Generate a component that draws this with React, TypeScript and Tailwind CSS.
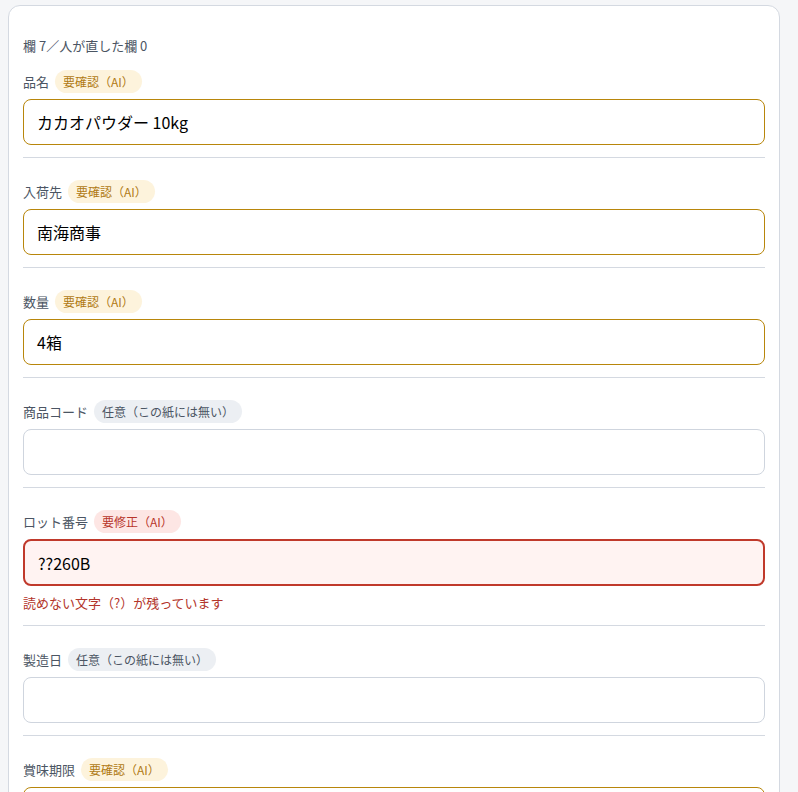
import React from "react";

type Tone = "warn" | "error" | "optional";

interface Field {
  label: string;
  tone: Tone;
  value: string;
  error?: string;
}

const fields: Field[] = [
  { label: "品名", tone: "warn", value: "カカオパウダー 10kg" },
  { label: "入荷先", tone: "warn", value: "南海商事" },
  { label: "数量", tone: "warn", value: "4箱" },
  { label: "商品コード", tone: "optional", value: "" },
  { label: "ロット番号", tone: "error", value: "??260B", error: "読めない文字（?）が残っています" },
  { label: "製造日", tone: "optional", value: "" },
  { label: "賞味期限", tone: "warn", value: "2026-03-31" },
];

const badgeText: Record<Tone, string> = {
  warn: "要確認（AI）",
  error: "要修正（AI）",
  optional: "任意（この紙には無い）",
};

const badgeClass: Record<Tone, string> = {
  warn: "bg-[#fdf3dc] text-[#b07a14]",
  error: "bg-[#fde6e4] text-[#b8352a]",
  optional: "bg-[#eceff3] text-[#4b5563]",
};

const inputClass: Record<Tone, string> = {
  warn: "h-[46px] border border-[#b8860b] bg-white",
  error: "h-[47px] border-2 border-[#c0392b] bg-[#fff3f2] px-[12px]",
  optional: "h-[46px] border border-[#cfd5de] bg-white",
};

function FieldRow({ field }: { field: Field }) {
  return (
    <div className="border-b border-[#d4d9e1] pb-3 pt-[22px] first:pt-0">
      <div className="flex h-[23px] items-center gap-[6px]">
        <span className="text-[13px] leading-none text-[#4b5563]">{field.label}</span>
        <span
          className={`flex h-[23px] items-center rounded-full px-[8px] text-[12px] leading-none ${badgeClass[field.tone]}`}
        >
          {badgeText[field.tone]}
        </span>
      </div>
      <div
        className={`mt-[6px] flex items-center rounded-lg px-[13px] text-[16px] text-black ${inputClass[field.tone]}`}
      >
        {field.value}
      </div>
      {field.error && (
        <p className="mt-[7px] text-[13px] leading-[20px] text-[#b3352b]">{field.error}</p>
      )}
    </div>
  );
}

export default function App() {
  return (
    <div
      className="min-h-screen bg-[#f5f6f8] px-2 pt-[5px]"
      style={{ fontFamily: '"Noto Sans CJK JP", "Noto Sans", sans-serif' }}
    >
      <div className="w-[772px] rounded-xl border border-[#d4d9e1] bg-white px-[14px] pt-[31px] pb-6">
        <p className="text-[13px] leading-[18px] text-[#4b5563]">欄 7／人が直した欄 0</p>
        <div className="mt-[15px] flex flex-col">
          {fields.map((f) => (
            <FieldRow key={f.label} field={f} />
          ))}
        </div>
      </div>
    </div>
  );
}
